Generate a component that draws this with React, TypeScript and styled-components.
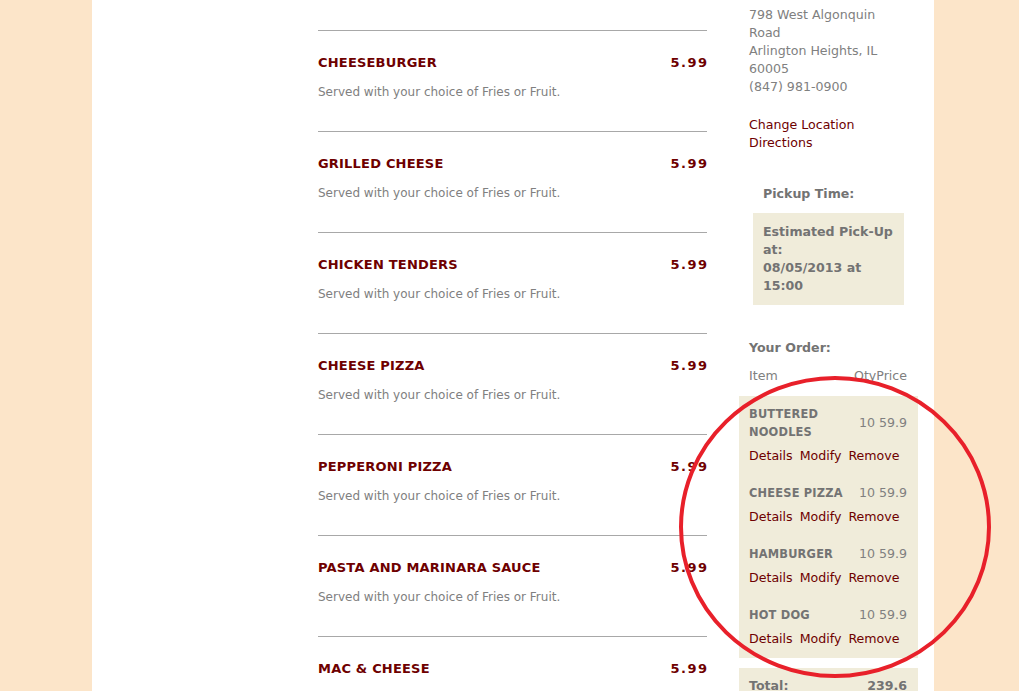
import React from 'react';
import styled, { createGlobalStyle } from 'styled-components';

const GlobalStyle = createGlobalStyle`
  html, body {
    margin: 0;
    padding: 0;
    background: #fce5c9;
    height: 100%;
    overflow: hidden;
  }
  body {
    font-family: "DejaVu Sans", Verdana, sans-serif;
  }
`;

const Page = styled.div`
  position: relative;
  width: 842px;
  min-height: 691px;
  margin-left: 92px;
  background: #fff;
  display: grid;
  grid-template-columns: 226px 389px 179px;
  align-items: start;
`;

const MenuList = styled.div`
  grid-column: 2;
  padding-top: 30px;
`;

const MenuItem = styled.div`
  border-top: 1px solid #a8a8a8;
  height: 101px;
  padding-top: 24px;
  box-sizing: border-box;
  .row {
    display: flex;
    justify-content: space-between;
    align-items: baseline;
    color: #6e0000;
    font-weight: bold;
    font-size: 13px;
  }
  .name {
    letter-spacing: 0.2px;
  }
  .price {
    letter-spacing: 1.5px;
    margin-right: -1.5px;
  }
  .desc {
    margin-top: 15px;
    color: #808080;
    font-size: 12px;
  }
`;

const Sidebar = styled.div`
  grid-column: 3;
  margin-left: 32px;
  width: 179px;
  padding-top: 6px;
  font-size: 12.6px;
  line-height: 18px;
`;

const Address = styled.div`
  color: #808080;
  padding: 0 10px;
`;

const Links = styled.div`
  padding: 20px 10px 0;
  a {
    display: block;
    color: #6e0000;
    text-decoration: none;
  }
`;

const Label = styled.div<{ indent?: boolean }>`
  color: #737373;
  font-weight: bold;
  padding-left: ${(p) => (p.indent ? '24px' : '10px')};
`;

const PickupBox = styled.div`
  margin: 10px 14px 0 14px;
  background: #f0ecda;
  color: #737373;
  font-weight: bold;
  padding: 10px;
`;

const OrderHead = styled.div`
  display: flex;
  justify-content: space-between;
  color: #808080;
  padding: 10px 11px 0 10px;
  margin-bottom: 11px;
`;

const OrderBox = styled.div`
  background: #f0ecda;
  padding: 9px 11px 10px 10px;
`;

const OrderItem = styled.div`
  margin-bottom: 19px;
  &:last-child {
    margin-bottom: 0;
  }
  .top {
    display: flex;
    justify-content: space-between;
    align-items: center;
  }
  .name {
    width: 104px;
    color: #737373;
    font-weight: bold;
    font-size: 11.4px;
    letter-spacing: 0.2px;
  }
  .qp {
    color: #808080;
    white-space: nowrap;
  }
  .links {
    margin-top: 6px;
    display: flex;
    gap: 7px;
    color: #6e0000;
  }
`;

const TotalBox = styled.div`
  margin-top: 10px;
  background: #f0ecda;
  display: flex;
  justify-content: space-between;
  padding: 9px 11px 9px 10px;
  color: #737373;
  font-weight: bold;
`;

const Circle = styled.svg`
  position: absolute;
  left: 585px;
  top: 375px;
  pointer-events: none;
`;

const items = [
  'CHEESEBURGER',
  'GRILLED CHEESE',
  'CHICKEN TENDERS',
  'CHEESE PIZZA',
  'PEPPERONI PIZZA',
  'PASTA AND MARINARA SAUCE',
  'MAC & CHEESE',
];

const order = ['BUTTERED NOODLES', 'CHEESE PIZZA', 'HAMBURGER', 'HOT DOG'];

export default function App() {
  return (
    <>
      <GlobalStyle />
      <Page>
        <MenuList>
          {items.map((name) => (
            <MenuItem key={name}>
              <div className="row">
                <span className="name">{name}</span>
                <span className="price">5.99</span>
              </div>
              <div className="desc">Served with your choice of Fries or Fruit.</div>
            </MenuItem>
          ))}
        </MenuList>
        <Sidebar>
          <Address>
            798 West Algonquin Road
            <br />
            Arlington Heights, IL 60005
            <br />
            (847) 981-0900
          </Address>
          <Links>
            <a href="#">Change Location</a>
            <a href="#">Directions</a>
          </Links>
          <div style={{ height: 33 }} />
          <Label indent>Pickup Time:</Label>
          <PickupBox>
            Estimated Pick-Up at:
            <br />
            08/05/2013 at 15:00
          </PickupBox>
          <div style={{ height: 34 }} />
          <Label>Your Order:</Label>
          <OrderHead>
            <span>Item</span>
            <span>QtyPrice</span>
          </OrderHead>
          <OrderBox>
            {order.map((name) => (
              <OrderItem key={name}>
                <div className="top">
                  <span className="name">{name}</span>
                  <span className="qp">10 59.9</span>
                </div>
                <div className="links">
                  <span>Details</span>
                  <span>Modify</span>
                  <span>Remove</span>
                </div>
              </OrderItem>
            ))}
          </OrderBox>
          <TotalBox>
            <span>Total:</span>
            <span>239.6</span>
          </TotalBox>
        </Sidebar>
        <Circle width="320" height="310" viewBox="0 0 320 310">
          <ellipse cx="158" cy="152" rx="154" ry="149" fill="none" stroke="#e8202a" strokeWidth="4" />
        </Circle>
      </Page>
    </>
  );
}
